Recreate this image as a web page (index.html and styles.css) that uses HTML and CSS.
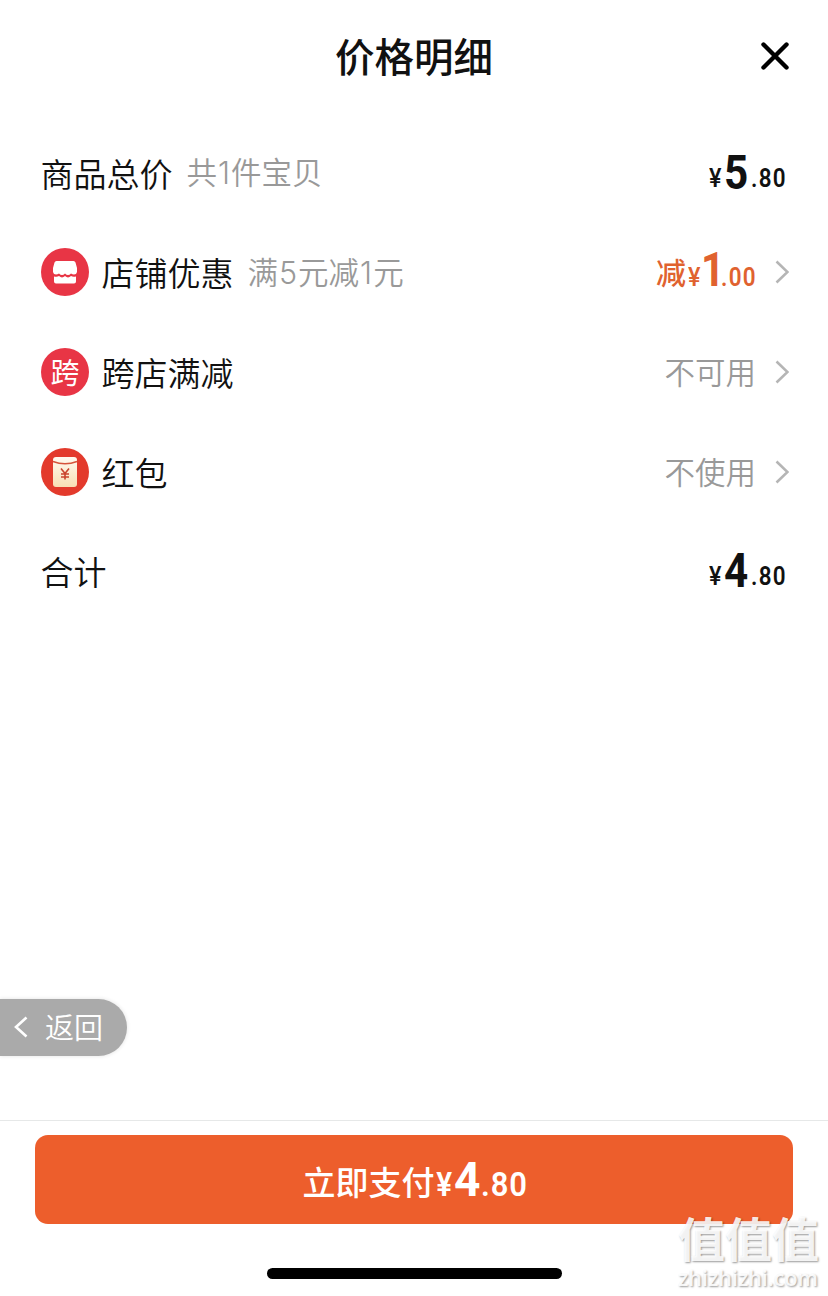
FILE: index.html
```html
<!DOCTYPE html>
<html lang="zh-CN">

<head>
    <meta charset="UTF-8">
    <meta name="viewport" content="width=device-width, initial-scale=1.0">
    <title>价格明细</title>
    <link rel="stylesheet" href="styles.css">
</head>

<body>
    <div class="sheet">
        <div class="header">
            <h1>价格明细</h1>
            <button class="close">
                <svg width="30" height="30" viewBox="0 0 30 30"><path d="M3.5 3.5l23 23M26.5 3.5l-23 23" /></svg>
            </button>
        </div>

        <ul class="list">
            <li>
                <span class="name">商品总价</span>
                <span class="desc">共<i>1</i>件宝贝</span>
                <span class="price"><span class="yen">¥</span><span class="int">5</span><span class="dec">.80</span></span>
            </li>
            <li>
                <svg class="icon" viewBox="0 0 48 48">
                    <circle cx="24" cy="24" r="24" fill="#e83545" />
                    <path d="M15.500 13h17q1.500 0 2 1.500l1.500 5.500v4q-.5 2.500-3 2.500-1.500 0-3-1-1.500 1.500-3 1.500t-3-1.500q-1.500 1.500-3 1.500t-3-1.500q-1.500 1-3 1-2.500 0-3-2.500v-4l1.500-5.500q.5-1.500 2-1.500z" fill="#fff" />
                    <path d="M13 28.500q3 .8 5-.4 1.500 1.400 3 1.400t3-1.400q1.500 1.400 3 1.400t3-1.400q2 1.200 5 .4v5q0 2-2 2h-18q-2 0-2-2z" fill="#fff" />
                </svg>
                <span class="name">店铺优惠</span>
                <span class="desc">满<i>5</i>元减<i>1</i>元</span>
                <span class="price discount"><b>减</b><span class="yen">¥</span><span class="int">1</span><span class="dec">.00</span></span>
                <svg class="arrow" viewBox="0 0 14 24"><path d="M1.500 1.500L12.500 12l-11 10.500" /></svg>
            </li>
            <li>
                <span class="icon icon-text">跨</span>
                <span class="name">跨店满减</span>
                <span class="value">不可用</span>
                <svg class="arrow" viewBox="0 0 14 24"><path d="M1.500 1.500L12.500 12l-11 10.500" /></svg>
            </li>
            <li>
                <svg class="icon" viewBox="0 0 48 48">
                    <defs>
                        <linearGradient id="paper" x1="0" y1="0" x2="0" y2="1">
                            <stop offset="0" stop-color="#fffaf0" />
                            <stop offset="1" stop-color="#f8dfb5" />
                        </linearGradient>
                    </defs>
                    <circle cx="24" cy="24" r="24" fill="#e33a2c" />
                    <rect x="12" y="9" width="24" height="30" rx="3" fill="url(#paper)" />
                    <path d="M12 13.500q12 4.500 24 0" fill="none" stroke="#d5533a" stroke-width="1.500" />
                    <path d="M20 20.500l4 5 4-5M20 26h8M20 29h8M24 25.500v6" fill="none" stroke="#c9452e" stroke-width="1.600" />
                </svg>
                <span class="name">红包</span>
                <span class="value">不使用</span>
                <svg class="arrow" viewBox="0 0 14 24"><path d="M1.500 1.500L12.500 12l-11 10.500" /></svg>
            </li>
            <li>
                <span class="name">合计</span>
                <span class="price"><span class="yen">¥</span><span class="int">4</span><span class="dec">.80</span></span>
            </li>
        </ul>

        <button class="back">
            <svg width="14" height="22" viewBox="0 0 14 22"><path d="M12.500 1.500L2 11l10.500 9.500" /></svg>
            <span>返回</span>
        </button>

        <div class="footer">
            <button class="pay">
                <span class="pay-text">立即支付</span><span class="yen">¥</span><span class="int">4</span><span class="dec">.80</span>
            </button>
            <div class="home-bar"></div>
        </div>

        <div class="watermark">
            <p class="mark-name">值值值</p>
            <p class="mark-url">zhizhizhi.com</p>
        </div>
    </div>
</body>

</html>
```

FILE: styles.css
```css
* {
    box-sizing: border-box;
}

body {
    margin: 0;
    background: #fff;
    color: #111;
    font-family: "Noto Sans CJK SC", sans-serif;
}

button {
    appearance: none;
    border: none;
    padding: 0;
    background: none;
    font-family: inherit;
}

.sheet {
    position: relative;
    width: 828px;
    height: 1296px;
    display: flex;
    flex-direction: column;
    overflow: hidden;
}

.header {
    height: 123px;
    padding: 0 38px;
    display: grid;
    grid-template-columns: 30px 1fr 30px;
}

.header h1 {
    grid-column: 2;
    margin: 0;
    font-size: 39.5px;
    font-weight: 500;
    line-height: 109px;
    text-align: center;
}

.close {
    height: 30px;
    margin-top: 41px;
}

.close svg {
    display: block;
    fill: none;
    stroke: #000;
    stroke-width: 4.4;
    stroke-linecap: round;
}

.list {
    margin: 0;
    padding: 0 39px 0 41px;
    list-style: none;
}

.list li {
    height: 99.6px;
    display: flex;
    align-items: center;
}

.icon {
    width: 48px;
    height: 48px;
    margin-right: 13px;
    flex: none;
}

.icon-text {
    border-radius: 50%;
    background: #e83545;
    color: #fff;
    font-size: 29px;
    line-height: 46px;
    text-align: center;
}

.name {
    margin-left: -0.5px;
    font-size: 33px;
    font-weight: 350;
    line-height: 48px;
}

.desc {
    margin-left: 14px;
    padding-bottom: 1px;
    color: #999;
    font-size: 30.5px;
    font-weight: 350;
    line-height: 46px;
}

.desc i {
    margin: 0 1px;
    font-family: "Inter", sans-serif;
    font-size: 30.5px;
    font-style: normal;
    font-weight: 350;
}

.value {
    margin-left: auto;
    padding-bottom: 2px;
    color: #999;
    font-size: 30.5px;
    font-weight: 350;
    line-height: 46px;
}

.arrow {
    width: 14px;
    height: 24px;
    margin-left: 19px;
    fill: none;
    stroke: #b5b5b5;
    stroke-width: 2.6;
}

.price {
    margin-left: auto;
    margin-right: 1px;
    padding-top: 3px;
    display: flex;
    align-items: baseline;
    font-family: "Roboto", sans-serif;
    font-weight: 700;
    line-height: 48px;
}

.yen {
    width: 15px;
    font-size: 25.5px;
    font-weight: 500;
    transform: scaleX(0.92);
    transform-origin: left;
}

.int {
    width: 27px;
    font-size: 48px;
    transform: translateY(1.5px) scaleX(0.88);
    transform-origin: left;
}

.dec {
    width: 37px;
    font-size: 25.5px;
    font-weight: 600;
    letter-spacing: 1.5px;
    transform: scaleX(0.88);
    transform-origin: left;
}

.discount {
    margin-right: -2px;
    color: #e0622f;
}

.discount b {
    width: 32px;
    font-family: "Noto Sans CJK SC", sans-serif;
    font-size: 30px;
    font-weight: 500;
    transform: translateY(-2.5px);
}

.discount .int {
    width: 20px;
    margin-left: -2px;
    transform: translateY(-0.5px) scaleX(0.86);
}

.back {
    width: 127px;
    height: 57px;
    margin-top: 378px;
    padding-left: 14px;
    display: flex;
    align-items: center;
    border-radius: 0 29px 29px 0;
    background: #aaa;
    box-shadow: 0 0 4px rgba(0, 0, 0, 0.12);
    color: #fff;
    font-size: 29px;
    font-weight: 350;
}

.back svg {
    margin-right: 17px;
    fill: none;
    stroke: #fff;
    stroke-width: 2.6;
}

.back span {
    padding-bottom: 3px;
}

.footer {
    margin-top: auto;
    height: 176px;
    padding: 14px 35px 0;
    border-top: 1px solid #e6e8e8;
}

.pay {
    width: 758px;
    height: 89px;
    padding-top: 2px;
    display: flex;
    align-items: baseline;
    justify-content: center;
    border-radius: 13px;
    background: #ed5e2c;
    color: #fff;
    font-family: "Roboto", sans-serif;
    font-weight: 700;
    line-height: 86px;
}

.pay-text {
    width: 134px;
    font-family: "Noto Sans CJK SC", sans-serif;
    font-size: 33px;
    font-weight: 500;
    transform: translateY(-1px);
}

.pay .yen {
    width: 18px;
    font-size: 33px;
    font-weight: 600;
    transform: scaleX(0.9);
}

.pay .int {
    width: 27px;
    font-size: 49px;
    transform: scaleX(0.94);
}

.pay .dec {
    width: 46px;
    font-size: 34px;
    letter-spacing: 1px;
    transform: scaleX(0.91);
}

.home-bar {
    width: 295px;
    height: 11px;
    margin: 44px auto 0;
    border-radius: 6px;
    background: #000;
}

/* site mark over the bottom right corner */
.watermark {
    position: absolute;
    right: 8px;
    bottom: 5px;
    width: 142px;
    color: rgba(255, 255, 255, 0.9);
    text-shadow: 1px 1px 2px rgba(0, 0, 0, 0.4);
}

.watermark p {
    margin: 0;
    white-space: nowrap;
}

.mark-name {
    font-size: 47px;
    font-weight: 700;
    line-height: 56px;
}

.mark-url {
    font-family: "Open Sans", sans-serif;
    font-size: 21.5px;
    font-weight: 600;
    line-height: 26px;
}
```
